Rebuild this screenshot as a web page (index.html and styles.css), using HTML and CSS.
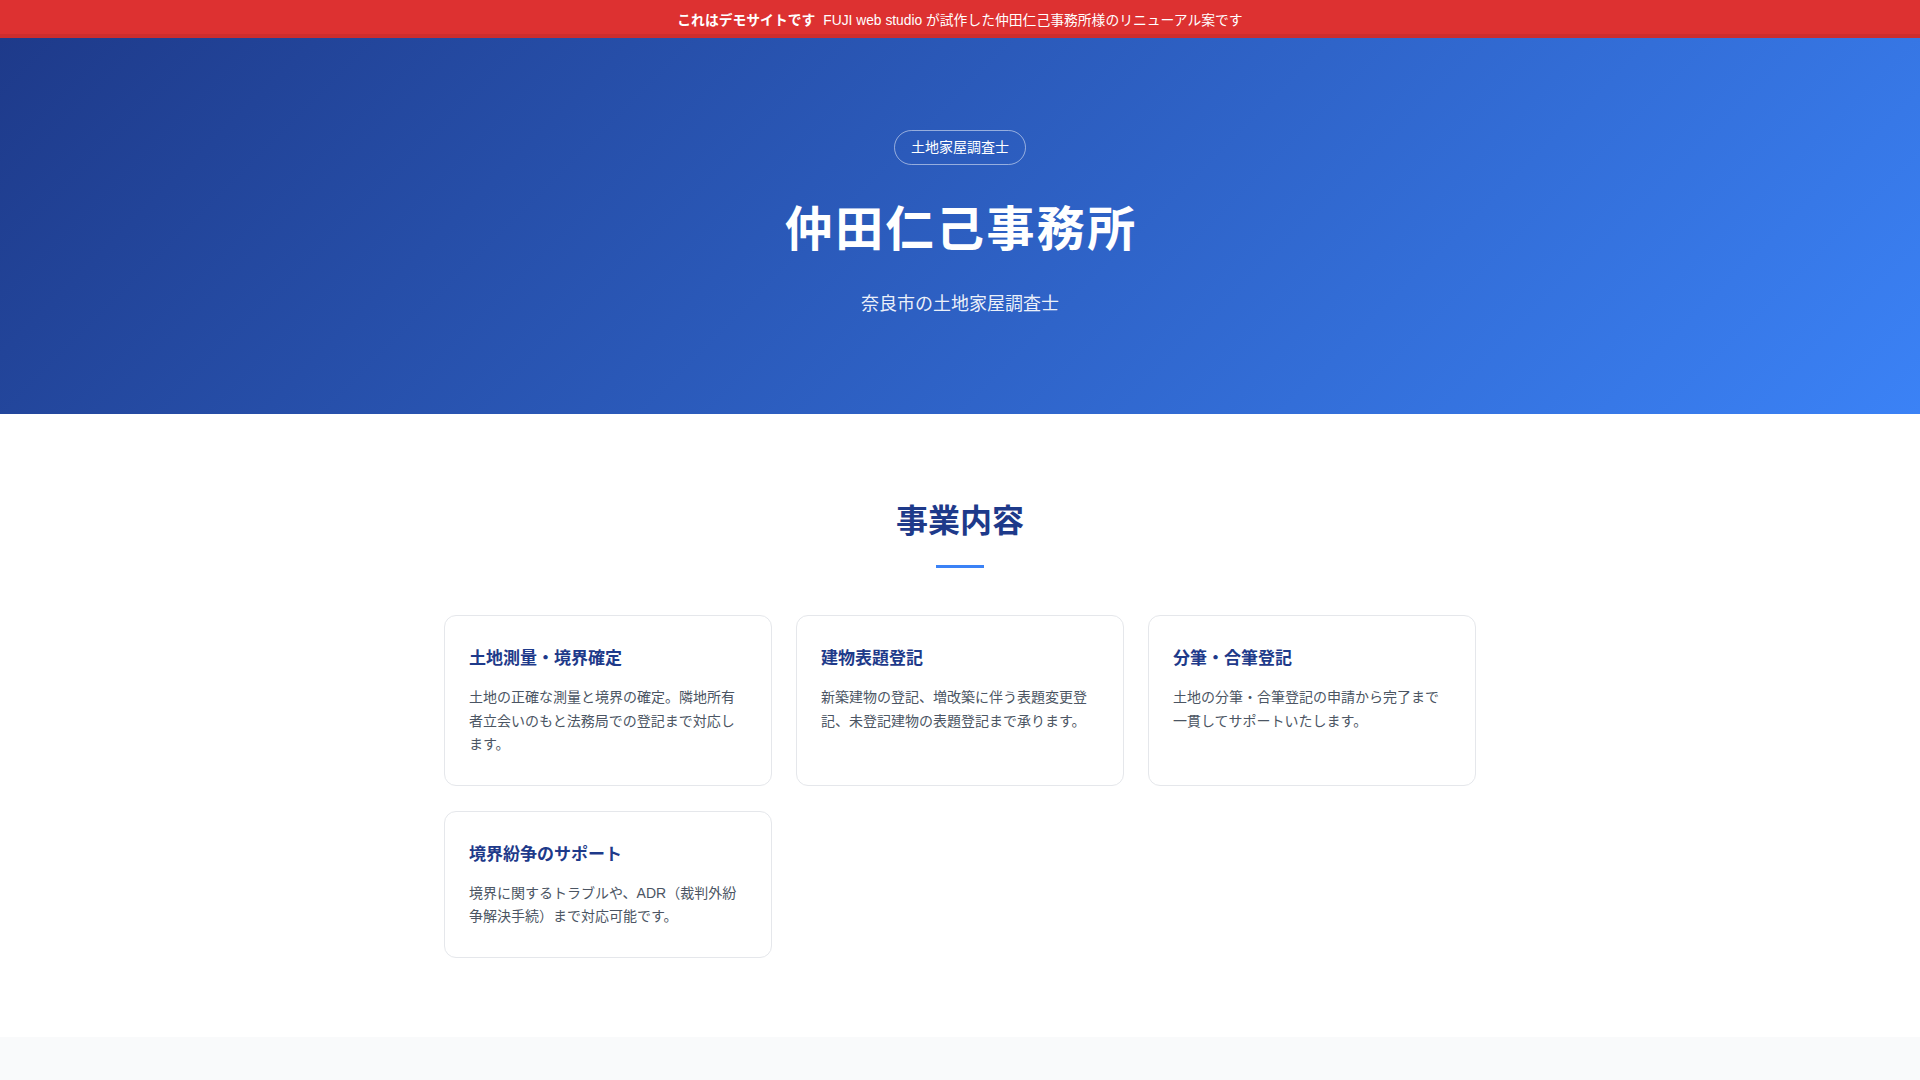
FILE: index.html
```html
<!DOCTYPE html>
<html lang="ja">
<head>
<meta charset="utf-8">
<title>仲田仁己事務所</title>
<link rel="stylesheet" href="styles.css">
</head>
<body>
<div class="demo-bar">
  <strong>これはデモサイトです</strong><span class="demo-note">FUJI web studio が試作した仲田仁己事務所様のリニューアル案です</span>
</div>
<header class="hero">
  <span class="badge">土地家屋調査士</span>
  <h1 class="hero-title">仲田仁己事務所</h1>
  <p class="hero-sub">奈良市の土地家屋調査士</p>
</header>
<section class="services">
  <h2 class="section-title">事業内容</h2>
  <div class="rule"></div>
  <div class="grid">
    <div class="card">
      <h3 class="card-title">土地測量・境界確定</h3>
      <p class="card-text">土地の正確な測量と境界の確定。隣地所有者立会いのもと法務局での登記まで対応します。</p>
    </div>
    <div class="card">
      <h3 class="card-title">建物表題登記</h3>
      <p class="card-text">新築建物の登記、増改築に伴う表題変更登記、未登記建物の表題登記まで承ります。</p>
    </div>
    <div class="card">
      <h3 class="card-title">分筆・合筆登記</h3>
      <p class="card-text">土地の分筆・合筆登記の申請から完了まで一貫してサポートいたします。</p>
    </div>
    <div class="card">
      <h3 class="card-title">境界紛争のサポート</h3>
      <p class="card-text">境界に関するトラブルや、ADR（裁判外紛争解決手続）まで対応可能です。</p>
    </div>
  </div>
</section>
<section class="next"></section>
</body>
</html>
```
FILE: styles.css
```css
* { box-sizing: border-box; }
html, body { margin: 0; padding: 0; }
body {
  font-family: "Liberation Sans", "Noto Sans CJK JP", sans-serif;
  color: #1f2937;
  background: #ffffff;
}
.demo-bar {
  height: 38px;
  background: #dd3131;
  color: #ffffff;
  font-size: 13.8px;
  display: flex;
  align-items: center;
  justify-content: center;
  gap: 8px;
  padding-bottom: 1px;
  box-shadow: inset 0 -4px 0 rgba(0,0,0,0.07);
}
.demo-bar strong { font-weight: 700; }
.hero {
  background: linear-gradient(135deg, #1e3a8a 0%, #3b82f6 100%);
  color: #ffffff;
  text-align: center;
  padding: 92px 20px 96px;
  display: flex;
  flex-direction: column;
  align-items: center;
}
.badge {
  display: inline-block;
  font-size: 14px;
  line-height: 21px;
  padding: 6px 16px;
  border: 1px solid rgba(255,255,255,0.5);
  border-radius: 999px;
}
.hero-title {
  margin: 36px 0 0;
  font-size: 48px;
  line-height: 58px;
  font-weight: 700;
  letter-spacing: 0.05em;
  padding-left: 0.05em;
}
.hero-sub {
  margin: 32px 0 0;
  font-size: 18px;
  line-height: 27px;
  color: rgba(255,255,255,0.92);
}
.services {
  padding: 85px 20px 79px;
  display: flex;
  flex-direction: column;
  align-items: center;
}
.section-title {
  margin: 0;
  font-size: 32px;
  line-height: 44px;
  font-weight: 700;
  color: #1e3a8a;
}
.rule {
  width: 48px;
  height: 3px;
  background: #3b82f6;
  margin-top: 22px;
}
.grid {
  margin-top: 47px;
  width: 1032px;
  display: grid;
  grid-template-columns: repeat(3, 1fr);
  gap: 25px 24px;
}
.card {
  border: 1px solid #e5e7eb;
  border-radius: 12px;
  padding: 26px 24px 28px;
  background: #ffffff;
}
.card-title {
  margin: 0 0 11px;
  font-size: 17px;
  line-height: 33px;
  font-weight: 700;
  color: #1e3a8a;
}
.card-text {
  margin: 0;
  font-size: 14px;
  line-height: 23.5px;
  color: #4b5563;
}
.next {
  background: #f9fafb;
  height: 200px;
}
```
